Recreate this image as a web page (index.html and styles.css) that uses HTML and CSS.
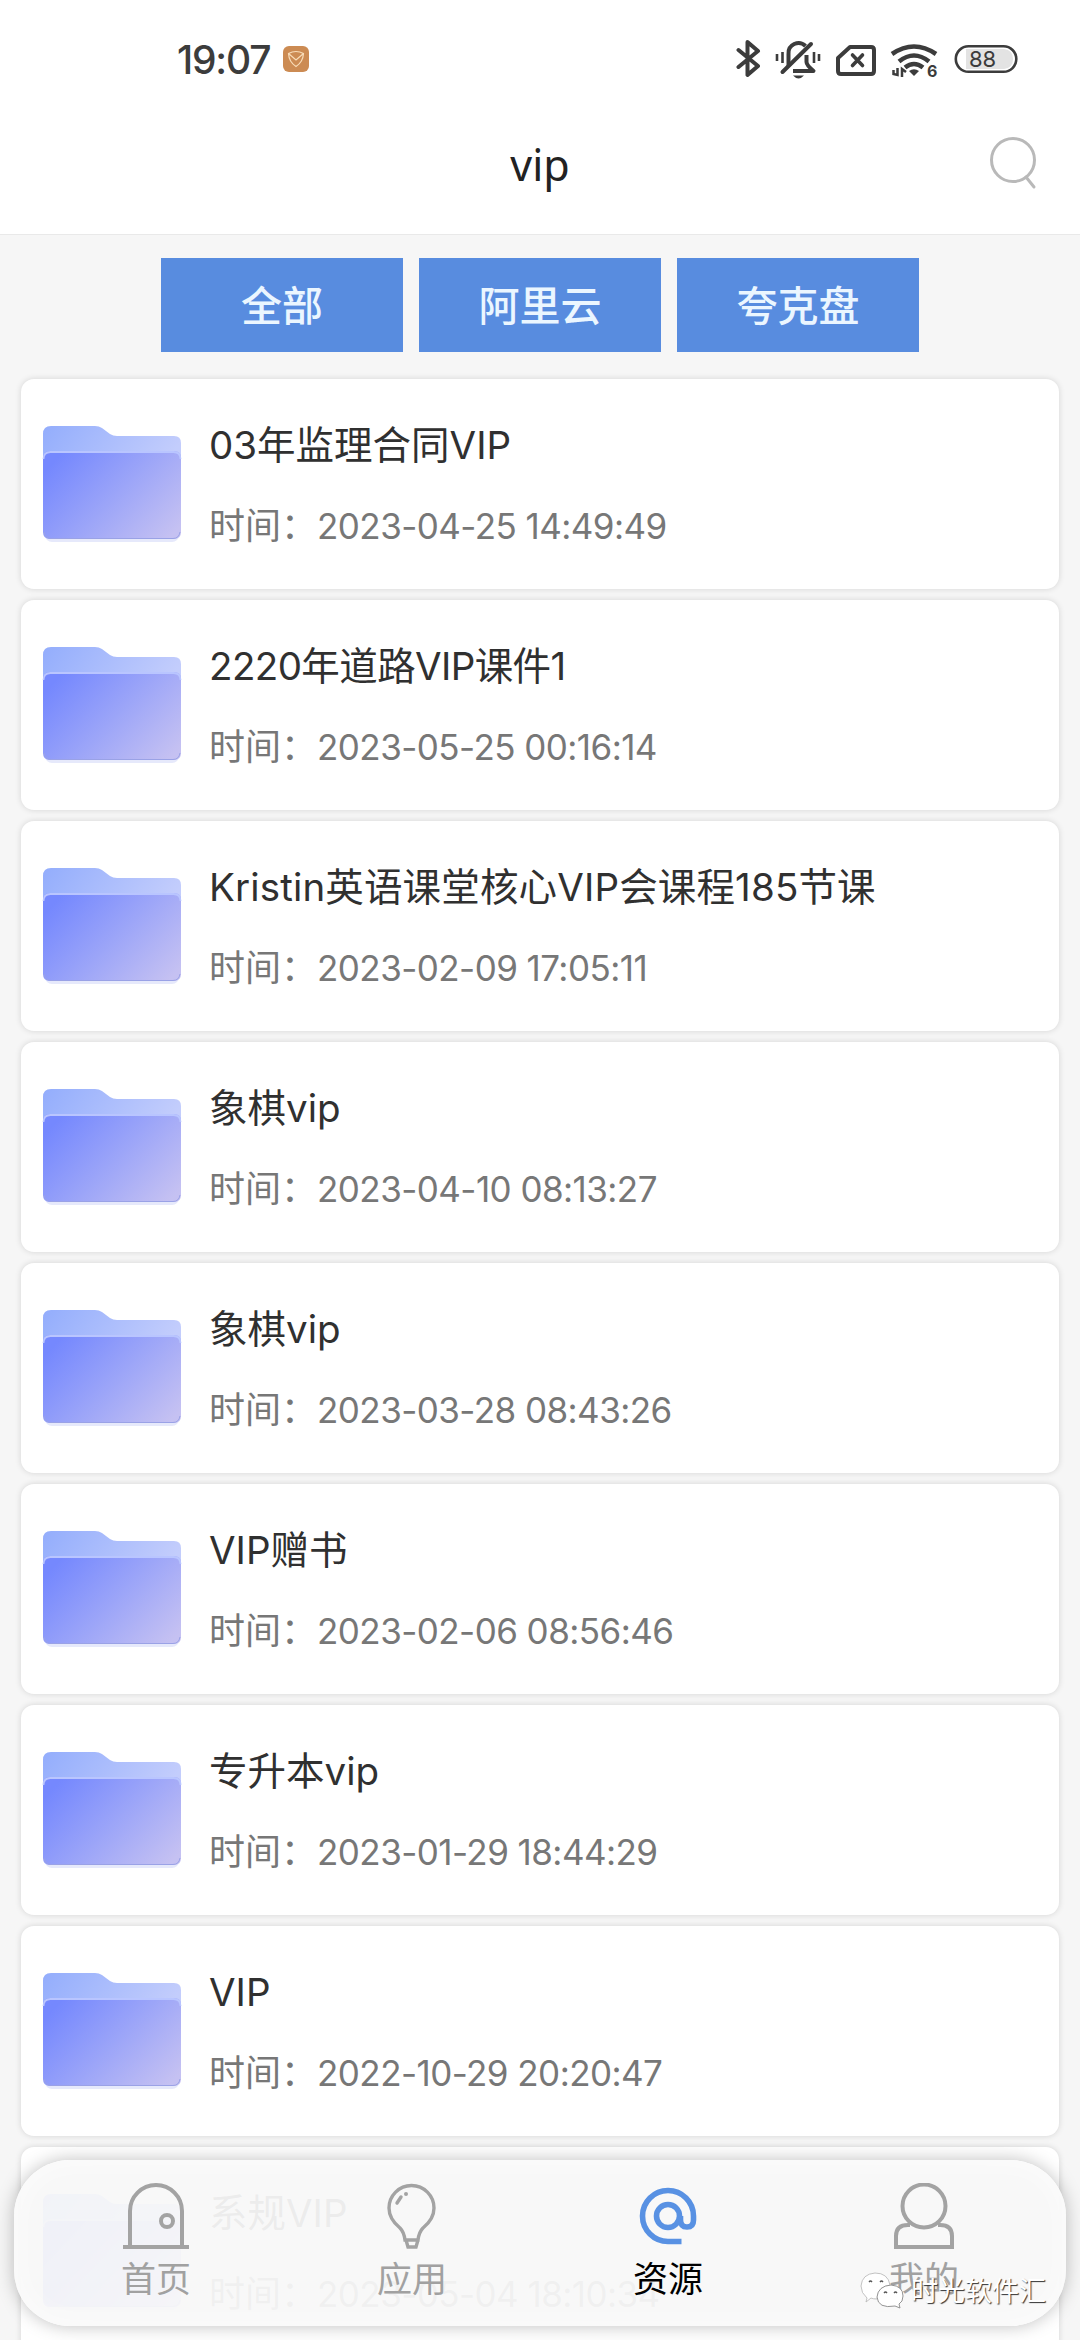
FILE: index.html
```html
<!DOCTYPE html>
<html lang="zh-CN">
<head>
<meta charset="utf-8">
<title>vip</title>
<link rel="stylesheet" href="styles.css">
</head>
<body>
<svg class="defs" width="0" height="0" aria-hidden="true">
  <defs>
    <linearGradient id="folder-back" x1="0" y1="0" x2="1" y2="0.3">
      <stop offset="0" stop-color="#93adfc"/><stop offset="1" stop-color="#c3cdfc"/>
    </linearGradient>
    <linearGradient id="folder-front" x1="0" y1="0.25" x2="1" y2="0.85">
      <stop offset="0" stop-color="#7588fe"/><stop offset="0.5" stop-color="#9ca5f8"/><stop offset="1" stop-color="#c5c1f2"/>
    </linearGradient>
    <symbol id="folder" viewBox="0 0 140 118">
      <rect x="3" y="30" width="134" height="87" rx="7" fill="#e6e9fb"/>
      <path d="M1 9q0-8 8-8h44q4 0 7 2l8 6q3 2 7 2h57q7 0 7 7v40H1z" fill="url(#folder-back)"/>
      <path d="M1 33q0-7 7-7h124q7 0 7 7v74q0 7-7 7H8q-7 0-7-7z" fill="url(#folder-front)"/>
      <path d="M1.500 34q0-7 7-7h123q7 0 7 7" fill="none" stroke="#b9c5ff" stroke-width="1.800"/>
      <path d="M2 107q1 6.500 7 6.500h122q6 0 7-6.500" fill="none" stroke="#9aa2e6" stroke-width="1"/>
    </symbol>
  </defs>
</svg>
<div class="screen">
  <header class="top">
    <div class="status">
      <span class="clock">19:07</span>
      <svg class="badge" viewBox="0 0 26 26"><rect width="26" height="26" rx="6" fill="#cc8b53"/><path d="M5.500 7.500Q13 3.500 20.500 7.500Q20 16 13 20.500Q6 16 5.500 7.500zM5.500 7.500L13 14L20.500 7.500" fill="none" stroke="#f8dcb8" stroke-width="1.200"/></svg>
      <svg class="system" viewBox="0 0 290 44" fill="none" stroke="#3c3c3c" stroke-width="4">
        <path d="M2.500 13L22 29L11.500 38V5L22 14L2.500 30" stroke-linejoin="round" stroke-linecap="round"/>
        <path d="M52.500 29V17a10 10 0 0 1 17-8M70.500 18v7q0 3 7 9H57" stroke-linejoin="round"/>
        <path d="M46.500 35L75 7" stroke-linecap="round"/>
        <path d="M57 38.500h11q-5.500 6-11 0z" fill="#3c3c3c" stroke="none"/>
        <path d="M41 17v7M46.500 15v11M78 15v11M83 17v7" stroke-width="2.600"/>
        <path d="M114 10h21q3 0 3 3v21q0 3-3 3h-30q-3 0-3-3V21z" stroke-linejoin="round"/>
        <path d="M116.500 18l10 10.500M126.500 18l-10 10.500" stroke-linecap="round" stroke-width="3.600"/>
        <path d="M156 17q22-15 44 0M163 24.500q15-12 30 0M169 30.500q9-7 18 0" stroke-width="4.600"/>
        <path d="M173 34q5-3.500 10 0l-5 5z" fill="#3c3c3c" stroke="none"/>
        <path d="M157.500 33v4l4 1V31M166 40v-8l4 3" stroke-width="2.500"/>
        <rect x="219.800" y="9.300" width="60.500" height="25.500" rx="12.750" stroke-width="2.600"/>
        <path d="M230 12h38q9 1 9 10t-9 10h-38z" fill="#e3e3e3" stroke="none"/>
        <g fill="#3c3c3c" stroke="none"><text class="wifi-gen" x="191" y="39.500">6</text><text class="level" x="233" y="30">88</text></g>
      </svg>
    </div>
    <div class="titlebar">
      <h1>vip</h1>
      <svg class="search" viewBox="0 0 50 56" fill="none" stroke="#b9b9b9" stroke-width="3"><circle cx="24" cy="24" r="21.500"/><path d="M37 41L45 51" stroke-linecap="round"/></svg>
    </div>
  </header>
  <nav class="filters"><button>全部</button><button>阿里云</button><button>夸克盘</button></nav>
  <main class="list">
    <article><svg class="folder"><use href="#folder"/></svg><div><h2>03年监理合同VIP</h2><p>时间：<time>2023-04-25 14:49:49</time></p></div></article>
    <article><svg class="folder"><use href="#folder"/></svg><div><h2 class="tight">2220年道路VIP课件1</h2><p>时间：<time>2023-05-25 00:16:14</time></p></div></article>
    <article><svg class="folder"><use href="#folder"/></svg><div><h2 class="loose">Kristin英语课堂核心VIP会课程185节课</h2><p>时间：<time>2023-02-09 17:05:11</time></p></div></article>
    <article><svg class="folder"><use href="#folder"/></svg><div><h2>象棋vip</h2><p>时间：<time>2023-04-10 08:13:27</time></p></div></article>
    <article><svg class="folder"><use href="#folder"/></svg><div><h2>象棋vip</h2><p>时间：<time>2023-03-28 08:43:26</time></p></div></article>
    <article><svg class="folder"><use href="#folder"/></svg><div><h2>VIP赠书</h2><p>时间：<time>2023-02-06 08:56:46</time></p></div></article>
    <article><svg class="folder"><use href="#folder"/></svg><div><h2>专升本vip</h2><p>时间：<time>2023-01-29 18:44:29</time></p></div></article>
    <article><svg class="folder"><use href="#folder"/></svg><div><h2>VIP</h2><p>时间：<time>2022-10-29 20:20:47</time></p></div></article>
    <article><svg class="folder"><use href="#folder"/></svg><div><h2>系规VIP</h2><p>时间：<time>2023-05-04 18:10:34</time></p></div></article>
  </main>
  <nav class="tabs">
    <a><svg viewBox="0 0 66 66" fill="none" stroke="#a3a3a3" stroke-width="4"><path d="M7 64V28a26 26 0 0 1 52 0v36M0 64h66"/><circle cx="44" cy="38" r="6"/></svg>首页</a>
    <a><svg viewBox="0 0 66 66" fill="none" stroke="#a3a3a3" stroke-width="3.400"><path d="M26 57q-1-8-5-12Q10 36 10 25a22.500 22.500 0 0 1 45 0Q55 36 44 45q-4 4-5 12zM27 57l2 7h8l2-7"/><path d="M18 20l4-6" stroke-linecap="round"/><circle cx="27" cy="11" r="2" fill="#a3a3a3" stroke="none"/></svg>应用</a>
    <a class="current"><svg viewBox="0 0 66 66" fill="none" stroke="#5891e3" stroke-width="5.600"><path d="M46.500 58.500H33a25.500 25.500 0 1 1 25.500-25.500v4q0 7-6.500 7t-6.500-7v-4"/><circle cx="33" cy="33" r="11.500"/></svg>资源</a>
    <a><svg viewBox="0 0 66 66" fill="none" stroke="#a3a3a3" stroke-width="4"><circle cx="33" cy="23" r="21.500"/><path d="M19 42h-2q-12 0-12 11v11h56V53q0-11-12-11h-2"/></svg>我的</a>
  </nav>
  <div class="watermark">
    <svg viewBox="0 0 46 38" fill="#fff" stroke="#888" stroke-width="0.900"><path d="M7 27Q1 22 1 15 2 3 15 2q13 0 15 12-12 2-13 14-4 0-6-1l-5 4z" stroke="#bbb"/><path d="M31 14q12 1 12 11 0 6-4 8l1 4-5-2q-17 3-18-9 1-11 14-12z"/><path d="M9 11q1.500-2 3 0M20 11q1.500-2 3 0M24 22q1.500-2 3 0M34 22q1.500-2 3 0" stroke="#555" stroke-width="1.300"/></svg>
    <span>时光软件汇</span>
  </div>
</div>
</body>
</html>
```
FILE: styles.css
```css
* { box-sizing: border-box; margin: 0; padding: 0; }
body { background: #f6f6f6; font-family: Inter, "Noto Sans CJK SC", sans-serif; }
.defs { position: absolute; }
.screen { position: relative; width: 1080px; height: 2340px; overflow: hidden; background: #f6f6f6; }

.top { height: 235px; background: #fff; border-bottom: 1px solid #e9e9e9; }
.status { display: flex; align-items: center; height: 118px; padding-left: 177px; }
.clock { width: 106px; font-size: 39px; font-weight: 500; letter-spacing: -1.2px; color: #3c3c3c; }
.badge { width: 26px; height: 26px; }
.system { width: 290px; height: 44px; margin-left: 427px; }
.wifi-gen { font-size: 16px; font-weight: 700; }
.level { font-size: 22px; }
.titlebar { display: grid; grid-template-columns: 1fr auto 1fr; align-items: center; height: 92px; padding-right: 41px; }
.titlebar h1 { grid-column: 2; padding-left: 41px; font: 400 43px "Noto Sans", sans-serif; color: #222; }
.search { justify-self: end; width: 50px; height: 56px; }

.filters { display: flex; justify-content: center; gap: 16px; padding: 23px 0 27px; }
.filters button { width: 242px; height: 94px; padding-bottom: 5px; border: 0; background: #588cdf; color: #ebf6ff; font: 500 41px "Noto Sans CJK SC", sans-serif; }

.list { display: flex; flex-direction: column; gap: 11px; padding: 0 21px; }
.list article { display: flex; flex: none; align-items: center; height: 210px; padding-left: 21px; border-radius: 13px; background: #fff; box-shadow: 0 0 6px rgba(0,0,0,.14); }
.folder { width: 140px; height: 118px; margin-right: 27px; }
.list h2 { padding-top: 2px; font-size: 38.5px; line-height: 54px; font-weight: 400; color: #303030; white-space: nowrap; }
.list .tight { letter-spacing: -0.6px; }
.list .loose { letter-spacing: 0.15px; }
.list p { margin-top: 28px; font-size: 36px; line-height: 52px; color: #777; white-space: nowrap; }
.list time { font-size: 35px; letter-spacing: -0.55px; }

.tabs { position: absolute; left: 14px; top: 2160px; display: flex; width: 1052px; height: 166px; padding: 23px 14px 0; border-radius: 56px; background: rgba(248,248,248,.94); box-shadow: 0 0 18px rgba(0,0,0,.25), inset 0 0 30px rgba(255,255,255,.7); }
.tabs a { flex: 1; display: flex; flex-direction: column; align-items: center; gap: 3px; font: 35px/50px "Noto Sans CJK SC", sans-serif; color: #a1a1a1; }
.tabs svg { width: 66px; height: 66px; }
.tabs .current { color: #000; }

.watermark { position: absolute; left: 860px; top: 2270px; display: flex; align-items: center; gap: 5px; font: 27px/40px "Noto Sans CJK SC", sans-serif; color: #fff; text-shadow: 1px 1px 1px #333; }
.watermark svg { width: 46px; height: 38px; }
```
